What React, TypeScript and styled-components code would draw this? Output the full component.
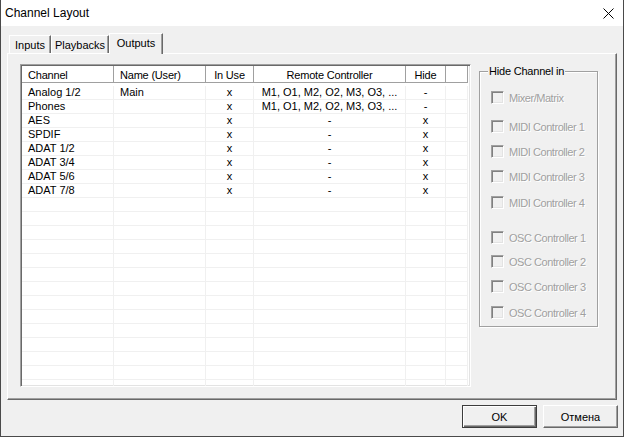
import styled, { createGlobalStyle } from "styled-components";

const GlobalStyle = createGlobalStyle`
html, body {
  margin: 0;
  padding: 0;
  background: #f0f0f0;
}
* {
  box-sizing: border-box;
}
body {
  font-family: "Liberation Sans", Arial, sans-serif;
  font-size: 11px;
  color: #000;
}
`;

const Window = styled.div`
  width: 624px;
  height: 437px;
  display: flex;
  flex-direction: column;
  background: #f0f0f0;
  border-left: 1px solid #4a4a4a;
  border-right: 1px solid #4a4a4a;
  border-bottom: 1px solid #4a4a4a;
  overflow: hidden;
`;

const TitleBar = styled.div`
  height: 26px;
  flex: none;
  display: flex;
  align-items: center;
  justify-content: space-between;
  padding: 0 9px 0 4px;
  background: #fff;
  font-size: 12px;
`;

const TabStrip = styled.div`
  height: 20px;
  flex: none;
  margin: 7px 0 0 8px;
  display: flex;
  align-items: flex-start;
  position: relative;
  z-index: 1;
`;

const Tab = styled.div<{ $active?: boolean; $w: number }>`
  width: ${(p) => p.$w}px;
  height: ${(p) => (p.$active ? 21 : 18)}px;
  margin-top: ${(p) => (p.$active ? 0 : 2)}px;
  display: flex;
  align-items: center;
  justify-content: center;
  padding-bottom: ${(p) => (p.$active ? 2 : 0)}px;
  background: #f0f0f0;
  border-top: 1px solid #fff;
  border-left: 1px solid #fff;
  border-right: 1px solid #696969;
  box-shadow: inset -1px 0 0 #a0a0a0;
`;

const Pane = styled.div`
  margin: 0 6px;
  height: 347px;
  flex: none;
  display: flex;
  align-items: flex-start;
  padding: 10px 0 0 12px;
  border-top: 1px solid #fff;
  border-left: 1px solid #fff;
  border-right: 1px solid #696969;
  border-bottom: 1px solid #696969;
  box-shadow: inset -1px -1px 0 #a0a0a0;
`;

const List = styled.div`
  width: 451px;
  height: 323px;
  flex: none;
  background: #fff;
  border-top: 1px solid #a0a0a0;
  border-left: 1px solid #a0a0a0;
  border-right: 1px solid #fff;
  border-bottom: 1px solid #fff;
  box-shadow: inset 1px 1px 0 #696969, inset -1px -1px 0 #e3e3e3;
  padding: 1px 2px 1px 1px;
  overflow: hidden;
`;

const cols = "92px 92px 48px 152px 40px 1fr";

const HeaderRow = styled.div`
  display: grid;
  grid-template-columns: ${cols};
  height: 17px;
  background: #fff;
`;

const HeaderCell = styled.div<{ $align?: string }>`
  display: flex;
  align-items: center;
  justify-content: ${(p) => p.$align || "flex-start"};
  padding: 1px 6px 0;
  border-right: 1px solid #a0a0a0;
  border-bottom: 1px solid #a0a0a0;
  white-space: nowrap;
  overflow: hidden;
  letter-spacing: -0.2px;
`;

const Rows = styled.div`
  margin-top: 3px;
`;

const Row = styled.div`
  display: grid;
  grid-template-columns: ${cols};
  height: 14px;
`;

const Cell = styled.div<{ $align?: string }>`
  display: flex;
  align-items: center;
  justify-content: ${(p) => p.$align || "flex-start"};
  padding: 0 6px 1px;
  border-right: 1px solid #f0f0f0;
  border-bottom: 1px solid #f0f0f0;
  white-space: nowrap;
  overflow: hidden;
`;

const Group = styled.div`
  position: relative;
  width: 119px;
  height: 256px;
  flex: none;
  margin: 7px 0 0 8px;
  padding-left: 11px;
  border: 1px solid #a0a0a0;
  box-shadow: 1px 1px 0 #fff, inset 1px 1px 0 #fff;
  display: flex;
  flex-direction: column;
`;

const GroupLabel = styled.span`
  position: absolute;
  top: -7px;
  left: 8px;
  padding: 0 1px;
  line-height: 13px;
  letter-spacing: -0.2px;
  background: #f0f0f0;
`;

const CheckItem = styled.div<{ $gap: number }>`
  display: flex;
  align-items: center;
  gap: 5px;
  height: 13px;
  margin-top: ${(p) => p.$gap}px;
  color: #a0a0a0;
  text-shadow: 1px 1px 0 #fff;
  letter-spacing: -0.45px;
  white-space: nowrap;
`;

const Box = styled.span`
  width: 13px;
  height: 13px;
  flex: none;
  background: #f0f0f0;
  border-top: 1px solid #a0a0a0;
  border-left: 1px solid #a0a0a0;
  border-right: 1px solid #fff;
  border-bottom: 1px solid #fff;
  box-shadow: inset 1px 1px 0 #808080, inset -1px -1px 0 #e3e3e3;
`;

const Footer = styled.div`
  display: flex;
  justify-content: flex-end;
  gap: 6px;
  padding: 5px 5px 0 0;
`;

const Button = styled.button<{ $default?: boolean }>`
  width: 75px;
  height: 23px;
  padding: 0;
  font-family: "Liberation Sans", Arial, sans-serif;
  font-size: 11px;
  font-weight: 400;
  color: #000;
  background: #f0f0f0;
  border: 1px solid ${(p) => (p.$default ? "#3c3c3c" : "#fff")};
  border-right-color: ${(p) => (p.$default ? "#3c3c3c" : "#696969")};
  border-bottom-color: ${(p) => (p.$default ? "#3c3c3c" : "#696969")};
  box-shadow: ${(p) =>
    p.$default
      ? "inset 1px 1px 0 #fff, inset -1px -1px 0 #696969, inset -2px -2px 0 #a0a0a0"
      : "inset -1px -1px 0 #a0a0a0"};
`;

const header = [
  { t: "Channel" },
  { t: "Name (User)" },
  { t: "In Use", a: "center" },
  { t: "Remote Controller", a: "center" },
  { t: "Hide", a: "center" },
  { t: "" },
];

const remote = "M1, O1, M2, O2, M3, O3, ...";

const data: string[][] = [
  ["Analog 1/2", "Main", "x", remote, "-"],
  ["Phones", "", "x", remote, "-"],
  ["AES", "", "x", "-", "x"],
  ["SPDIF", "", "x", "-", "x"],
  ["ADAT 1/2", "", "x", "-", "x"],
  ["ADAT 3/4", "", "x", "-", "x"],
  ["ADAT 5/6", "", "x", "-", "x"],
  ["ADAT 7/8", "", "x", "-", "x"],
];

const rows = [...data, ...Array.from({ length: 15 }, () => ["", "", "", "", ""])];

const checks = [
  { label: "Mixer/Matrix", gap: 19 },
  { label: "MIDI Controller 1", gap: 16 },
  { label: "MIDI Controller 2", gap: 12 },
  { label: "MIDI Controller 3", gap: 12 },
  { label: "MIDI Controller 4", gap: 13 },
  { label: "OSC Controller 1", gap: 22 },
  { label: "OSC Controller 2", gap: 11 },
  { label: "OSC Controller 3", gap: 12 },
  { label: "OSC Controller 4", gap: 13 },
];

const App: React.FC = () => {
  return (
    <>
      <GlobalStyle />
      <Window>
        <TitleBar>
          <span>Channel Layout</span>
          <svg width="11" height="11" viewBox="0 0 11 11">
            <path d="M0.5 0.5 L10.5 10.5 M10.5 0.5 L0.5 10.5" stroke="#000" strokeWidth="1" />
          </svg>
        </TitleBar>
        <TabStrip>
          <Tab $w={42}>Inputs</Tab>
          <Tab $w={58}>Playbacks</Tab>
          <Tab $w={54} $active>
            Outputs
          </Tab>
        </TabStrip>
        <Pane>
          <List>
            <HeaderRow>
              {header.map((h, i) => (
                <HeaderCell key={i} $align={h.a}>
                  {h.t}
                </HeaderCell>
              ))}
            </HeaderRow>
            <Rows>
              {rows.map((r, i) => (
                <Row key={i}>
                  {r.map((c, j) => (
                    <Cell key={j} $align={j >= 2 ? "center" : undefined}>
                      {c}
                    </Cell>
                  ))}
                  <Cell />
                </Row>
              ))}
            </Rows>
          </List>
          <Group>
            <GroupLabel>Hide Channel in</GroupLabel>
            {checks.map((c) => (
              <CheckItem key={c.label} $gap={c.gap}>
                <Box />
                {c.label}
              </CheckItem>
            ))}
          </Group>
        </Pane>
        <Footer>
          <Button $default>OK</Button>
          <Button>Отмена</Button>
        </Footer>
      </Window>
    </>
  );
};

export default App;
